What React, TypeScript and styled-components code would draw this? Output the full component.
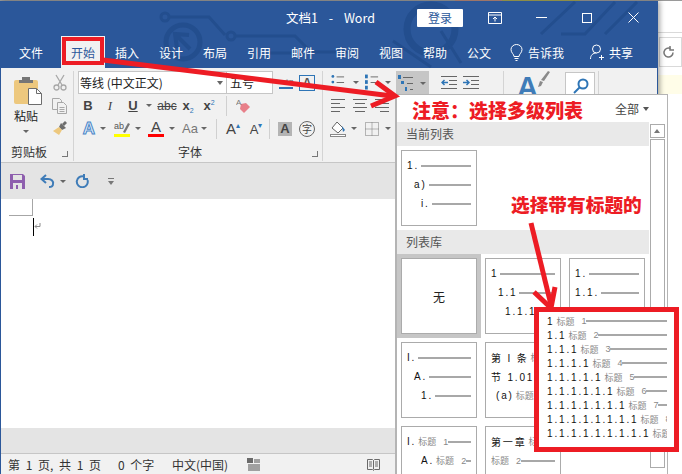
import React from "react";
import styled, { createGlobalStyle } from "styled-components";

const CJK = `"Noto Sans CJK SC", "Liberation Sans", sans-serif`;
const BLUE = "#2b579a";
const RED = "#ed1c24";

const GlobalStyle = createGlobalStyle`
  html, body { margin: 0; padding: 0; background: #fff; }
  * { box-sizing: border-box; }
  body { font-family: ${CJK}; font-size: 12px; }
`;

const tabs = ["插入", "设计", "布局", "引用", "邮件", "审阅", "视图", "帮助", "公文"];

type Level = { label: string; title?: string; num?: string; indent?: number; noLine?: boolean };

const currentList: Level[] = [
  { label: "1." },
  { label: "a)", indent: 7 },
  { label: "i.", indent: 14 },
];

const gallery: Level[][] = [
  [],
  [{ label: "1" }, { label: "1.1", indent: 7 }, { label: "1.1.1", indent: 14 }],
  [{ label: "1." }, { label: "1.1." }, { label: "1.1.1." }],
  [{ label: "I." }, { label: "A.", indent: 7 }, { label: "1.", indent: 14 }],
  [
    { label: "第 I 条", title: "标题", noLine: true },
    { label: "节 1.01", title: "标题", noLine: true },
    { label: "(a)", title: "标题", num: "3", indent: 5 },
  ],
  [],
  [
    { label: "I.", title: "标题", num: "1" },
    { label: "A.", title: "标题", num: "2", indent: 14 },
  ],
  [
    { label: "第一章", title: "标题", noLine: true },
    { label: "", title: "标题", num: "2" },
  ],
];

const headingLevels = [1, 2, 3, 4, 5, 6, 7, 8, 9];

export default function App() {
  return (
    <Page>
      <GlobalStyle />
      <BrowserTop />
      <Main>
        <WordWindow>
          <Circuit />
          <TitleBar>
            <DocTitle>文档1 - Word</DocTitle>
            <LoginButton>登录</LoginButton>
            <WinButton $ml={9}>
              <svg width="14" height="12" viewBox="0 0 14 12" fill="none" stroke="#fff">
                <path d="M.5.5h13v11H.5zM.5 3h13M7 9.5V5M5 7l2-2 2 2" />
              </svg>
            </WinButton>
            <WinButton>
              <svg width="11" height="1"><rect width="11" height="1" fill="#fff" /></svg>
            </WinButton>
            <WinButton>
              <svg width="10" height="10" fill="none" stroke="#fff"><rect x=".5" y=".5" width="9" height="9" /></svg>
            </WinButton>
            <WinButton>
              <svg width="11" height="11" fill="none" stroke="#fff"><path d="M.5.5l10 10M10.5.5l-10 10" /></svg>
            </WinButton>
          </TitleBar>
          <TabBar>
            <Tab $w={60}>文件</Tab>
            <Tab $w={44} $active>开始</Tab>
            {tabs.map((t) => (
              <Tab key={t} $w={44}>{t}</Tab>
            ))}
            <TabIcon $ml={9}>
              <svg width="13" height="17" viewBox="0 0 13 17" fill="none" stroke="#fff">
                <path d="M4 12.5C4 10 1 9 1 5.5a5.5 5 0 0 1 11 0C12 9 9 10 9 12.5zM4.5 14.5h4M5.5 16.5h2" />
              </svg>
            </TabIcon>
            <TabText $ml={5}>告诉我</TabText>
            <TabIcon $ml={26}>
              <svg width="15" height="17" viewBox="0 0 15 17" fill="none" stroke="#fff">
                <circle cx="6.5" cy="5" r="4" />
                <path d="M.5 15c0-4 2.500-6 6-6M11.500 11v5M9 13.500h5" />
              </svg>
            </TabIcon>
            <TabText $ml={4}>共享</TabText>
          </TabBar>
          <Ribbon>
            <Group $w={73}>
              <GroupBody>
                <PasteColumn>
                  <svg width="28" height="29" viewBox="0 0 28 29">
                    <rect x="0" y="4" width="24" height="24" rx="2" fill="#edc87e" />
                    <path d="M8 4V1h8v3h3v3H5V4z" fill="#767676" />
                    <path d="M14.500 12.500h8l5 5v11h-13z" fill="#fff" stroke="#6d6d6d" />
                    <path d="M22.500 12.500v5h5" fill="none" stroke="#6d6d6d" />
                  </svg>
                  <PasteLabel>粘贴</PasteLabel>
                  <PasteCaret />
                </PasteColumn>
                <SideColumn>
                  <Slot $w={19}>
                    <svg width="14" height="17" viewBox="0 0 14 17" fill="none" stroke="#a8a8a8" strokeWidth="1.300">
                      <path d="M3 1l6 10M11 1L5 11" />
                      <circle cx="3.500" cy="13.500" r="2.500" />
                      <circle cx="10.500" cy="13.500" r="2.500" />
                    </svg>
                  </Slot>
                  <Slot $w={19}>
                    <svg width="15" height="16" viewBox="0 0 15 16" fill="#f1f1f1" stroke="#a8a8a8">
                      <path d="M.5.5h7l2 2v9h-9z" />
                      <path d="M5.500 4.500h6l3 3v8h-9z" />
                      <path d="M7.500 9.500h5M7.500 11.500h5M7.500 13.500h5" />
                    </svg>
                  </Slot>
                  <Slot $w={19}>
                    <svg width="16" height="15" viewBox="0 0 16 15">
                      <path d="M9 2l5 5-4 2-3-3z" fill="#6d6d6d" />
                      <path d="M7 6l3 3-3 5-6-4z" fill="#edc87e" />
                      <path d="M13 0l2 2-3 3-2-2z" fill="#6d6d6d" />
                    </svg>
                  </Slot>
                </SideColumn>
              </GroupBody>
              <GroupLabel $pl={10}>
                剪贴板
                <Launcher $right={5} />
              </GroupLabel>
            </Group>
            <Group $w={249}>
              <GroupBody>
                <Rows>
                  <ToolRow $pl={4}>
                    <FontCombo>
                      等线 (中文正文)
                      <ComboCaret />
                    </FontCombo>
                    <SizeCombo>五号</SizeCombo>
                    <Slot $w={16} $ml={5}>
                      <WenIcon>wén</WenIcon>
                    </Slot>
                    <BoxedA>A</BoxedA>
                  </ToolRow>
                  <ToolRow $pl={4}>
                    <Slot $w={20}><Glyph $bold>B</Glyph></Slot>
                    <Slot $w={24}><Glyph $italic>I</Glyph></Slot>
                    <Slot $w={22}><Glyph $under>U</Glyph></Slot>
                    <Slot $w={10}><Caret /></Slot>
                    <Slot $w={26}><Glyph $strike $size={12}>abc</Glyph></Slot>
                    <Slot $w={16}><Glyph $bold>x<SmallBlue $sub>2</SmallBlue></Glyph></Slot>
                    <Slot $w={26}><Glyph $bold>x<SmallBlue>2</SmallBlue></Glyph></Slot>
                    <Slot $w={8}><VLine /></Slot>
                    <Slot $w={26}>
                      <svg width="14" height="16" viewBox="0 0 14 16">
                        <path d="M5 6l5-1 4 4-6 6-4-4z" fill="#e8808a" />
                        <text x="0" y="7" fontSize="8" fill="#777" fontFamily="Liberation Sans">A</text>
                      </svg>
                    </Slot>
                  </ToolRow>
                  <ToolRow $pl={4}>
                    <Slot $w={22}><EffectA>A</EffectA></Slot>
                    <Slot $w={6}><Caret /></Slot>
                    <Slot $w={20} $ml={6}>
                      <BarTool $bar="#ffff00">
                        <svg width="16" height="13" viewBox="0 0 16 13">
                          <text x="0" y="8" fontSize="9" fill="#555" fontFamily="Liberation Sans">ab</text>
                          <path d="M9 11l5-9 2 1-5 9z" fill="#777" />
                        </svg>
                      </BarTool>
                    </Slot>
                    <Slot $w={12}><Caret /></Slot>
                    <Slot $w={20} $ml={2}>
                      <BarTool $bar="#ff0000"><Glyph $size={15}>A</Glyph></BarTool>
                    </Slot>
                    <Slot $w={12}><Caret /></Slot>
                    <Slot $w={20} $ml={2}><Glyph $size={13} $light>Aa</Glyph></Slot>
                    <Slot $w={8}><Caret /></Slot>
                    <Slot $w={16}><VLine /></Slot>
                    <Slot $w={18}><Glyph $size={15}>A<BlueTick>▴</BlueTick></Glyph></Slot>
                    <Slot $w={18} $ml={5}><Glyph $size={13}>A<BlueTick>▾</BlueTick></Glyph></Slot>
                    <Slot $w={8}><VLine /></Slot>
                    <ShadedA>A</ShadedA>
                    <CircleChar>字</CircleChar>
                  </ToolRow>
                </Rows>
              </GroupBody>
              <GroupLabel $pl={104}>
                字体
                <Launcher $right={4} />
              </GroupLabel>
            </Group>
            <Group $w={181}>
              <GroupBody>
                <Rows>
                  <ToolRow $pl={8}>
                    <Slot $w={14}><ListIcon $kind="bullet" /></Slot>
                    <Slot $w={21}><Caret /></Slot>
                    <Slot $w={14} $ml={-1}><ListIcon $kind="number" /></Slot>
                    <Slot $w={17}><Caret /></Slot>
                    <ActiveTool>
                      <ListIcon $kind="multi" />
                      <Caret />
                    </ActiveTool>
                    <Slot $w={16} $ml={12}><IndentIcon /></Slot>
                    <Slot $w={16} $ml={6}><IndentIcon $flip /></Slot>
                  </ToolRow>
                  <ToolRow $pl={8}>
                    <Slot $w={14}><AlignIcon $pad="left" /></Slot>
                    <Slot $w={14} $ml={8}><AlignIcon $pad="center" /></Slot>
                    <Slot $w={14} $ml={8}><AlignIcon $pad="right" /></Slot>
                  </ToolRow>
                  <ToolRow $pl={7}>
                    <Slot $w={16}>
                      <svg width="16" height="16" viewBox="0 0 16 16">
                        <path d="M7 1l6 6-5 5-6-5z" fill="#fff" stroke="#666" />
                        <path d="M12 5l3 4-2 2z" fill="#2e75b6" />
                        <rect x="0.500" y="13.500" width="15" height="2" fill="#fff" stroke="#888" />
                      </svg>
                    </Slot>
                    <Slot $w={16}><Caret /></Slot>
                    <Slot $w={14} $ml={3}>
                      <svg width="14" height="14" stroke="#777" strokeDasharray="1 1" fill="none">
                        <path d="M.5.5h13v13H.5zM7 .5v13M.5 7h13" />
                      </svg>
                    </Slot>
                    <Slot $w={18}><Caret /></Slot>
                  </ToolRow>
                </Rows>
              </GroupBody>
            </Group>
            <Group $w={95}>
              <StylesBody>
                <BigA>A</BigA>
                <svg width="12" height="16" viewBox="0 0 12 16">
                  <path d="M10 0l2 1-6 9-3-1zM2 10l3 1-2 4-3 1z" fill="#8a8a8a" />
                </svg>
                <FindBox>
                  <svg width="16" height="16" viewBox="0 0 16 16" fill="none" stroke="#2e75b6" strokeWidth="2">
                    <circle cx="10" cy="6" r="4.500" />
                    <path d="M7 9l-6 6" />
                  </svg>
                </FindBox>
              </StylesBody>
            </Group>
          </Ribbon>
          <QuickBar>
            <svg width="15" height="15" viewBox="0 0 15 15">
              <path d="M0 0h13l2 2v13H0z" fill="#8e5fae" />
              <rect x="3" y="1" width="9" height="5" fill="#e4e4e4" />
              <rect x="3" y="9" width="9" height="6" fill="#e4e4e4" />
              <rect x="6" y="11" width="2" height="4" fill="#8e5fae" />
            </svg>
            <QuickSlot $ml={15}>
              <svg width="15" height="14" viewBox="0 0 15 14" fill="none" stroke="#3f7cb8" strokeWidth="2">
                <path d="M6 1L1.500 5 6 9" />
                <path d="M2 5h6a5 4 0 0 1 5 5c0 2-2 3-4 3" />
              </svg>
            </QuickSlot>
            <QuickSlot $ml={5}><Caret /></QuickSlot>
            <QuickSlot $ml={9}>
              <svg width="14" height="14" viewBox="0 0 14 14" fill="none" stroke="#3f7cb8" strokeWidth="2">
                <path d="M9 2.500A5.500 5.500 0 1 0 12.500 6" />
                <path d="M9 0v5h4" />
              </svg>
            </QuickSlot>
            <QuickSlot $ml={19}>
              <svg width="6" height="7" viewBox="0 0 6 7" fill="#777">
                <rect width="6" height="1" />
                <path d="M0 3h6L3 7z" />
              </svg>
            </QuickSlot>
          </QuickBar>
          <DocArea>
            <MarginCorner />
            <CursorLine>
              <svg width="7" height="7" viewBox="0 0 7 7" fill="none" stroke="#8a8a8a">
                <path d="M6 0v3.500H1M3 1.500L1 3.500l2 2" />
              </svg>
            </CursorLine>
          </DocArea>
          <ScrollStrip />
          <StatusBar>
            <StatusText $w={110}>第 1 页, 共 1 页</StatusText>
            <StatusText $w={54}>0 个字</StatusText>
            <StatusText $w={75}>中文(中国)</StatusText>
            <svg width="13" height="13" viewBox="0 0 13 13" fill="#6a6a6a">
              <rect x="0" y="0" width="6" height="5" />
              <path d="M1 6h12v7H1zM7 1h6v4H7z" opacity=".6" />
            </svg>
            <ReadIcon>
              <svg width="13" height="13" viewBox="0 0 13 13" fill="none" stroke="#6a6a6a">
                <path d="M.5 1.500h5l1 1 1-1h5v10h-5l-1 1-1-1h-5zM6.500 2.500v9M2 4h3M2 6h3M2 8h3M8 4h3M8 6h3M8 8h3" />
              </svg>
            </ReadIcon>
          </StatusBar>
        </WordWindow>
        <BrowserSide>
          <ReloadBox>
            <svg width="11" height="12" viewBox="0 0 11 12" fill="none" stroke="#777" strokeWidth="1.500">
              <path d="M7.500 2.500A4.500 4.500 0 1 0 10 6.500" />
              <path d="M7 0v4h4" />
            </svg>
          </ReloadBox>
          <InfoBar />
        </BrowserSide>
      </Main>

      <ListPanel>
        <PanelHeader>
          全部
          <PanelCaret />
        </PanelHeader>
        <PanelBody>
          <PanelList>
            <SectionHead>当前列表</SectionHead>
            <CellGrid>
              <ListCell levels={currentList} />
            </CellGrid>
            <SectionHead>列表库</SectionHead>
            <CellGrid>
              {gallery.map((levels, i) =>
                i === 0 ? (
                  <Cell key={i} $selected>
                    <CellInner $center>无</CellInner>
                  </Cell>
                ) : (
                  <ListCell key={i} levels={levels} />
                ),
              )}
            </CellGrid>
          </PanelList>
          <ScrollColumn>
            <ScrollUp />
            <ScrollThumb />
          </ScrollColumn>
        </PanelBody>
      </ListPanel>

      <TabHighlight />
      <ArrowLayer width="682" height="474" viewBox="0 0 682 474">
        <g fill="none" stroke={RED} strokeWidth="5" strokeLinejoin="miter">
          <path d="M103 60L392 96" />
          <path d="M376 82L395 96L371 106" />
          <path d="M531 223L551 305" />
          <path d="M534 292L551 308L555 287" />
        </g>
      </ArrowLayer>
      <NoteOne>注意：选择多级列表</NoteOne>
      <NoteTwo>选择带有标题的</NoteTwo>
      <HeadingBox>
        {headingLevels.map((n) => (
          <HeadingRow key={n}>
            <LevelLabel>{Array.from({ length: n }, () => "1").join(".")}</LevelLabel>
            <TitleMark>标题</TitleMark>
            {n < 9 && <TitleNum>{n}</TitleNum>}
            {n < 8 && <RowLine />}
          </HeadingRow>
        ))}
      </HeadingBox>
    </Page>
  );
}

function ListCell({ levels }: { levels: Level[] }) {
  return (
    <Cell>
      <CellInner>
        {levels.map((l, i) => (
          <CellRow key={i} $indent={l.indent ?? 0}>
            {l.label && <LevelLabel>{l.label}</LevelLabel>}
            {l.title && <TitleMark>{l.title}</TitleMark>}
            {l.num && <TitleNum>{l.num}</TitleNum>}
            {!l.noLine && <RowLine />}
          </CellRow>
        ))}
      </CellInner>
    </Cell>
  );
}

function Circuit() {
  return (
    <CircuitSvg width="656" height="67" viewBox="0 0 656 67" fill="none" stroke="#234e8e" strokeWidth="3">
      <circle cx="164" cy="16" r="4" />
      <path d="M168 16h40l16 18" />
      <circle cx="182" cy="41" r="17" strokeWidth="5" />
      <path d="M176 47l-2-14 14 1M175 34l14 14" strokeWidth="4" />
      <circle cx="230" cy="35" r="4" />
      <path d="M234 35h60l16 16h40M268 52h34" />
      <circle cx="430" cy="28" r="24" strokeWidth="7" />
      <path d="M392 40l38 26M440 30l20 32M540 33l34-32M560 33h24l30-32M604 33l32-32" />
    </CircuitSvg>
  );
}

function ListIcon({ $kind }: { $kind: "bullet" | "number" | "multi" }) {
  const c = "#2e75b6";
  return (
    <svg width="15" height="17" viewBox="0 0 15 17" stroke="#666">
      {$kind === "bullet" && (
        <>
          <circle cx="2" cy="2" r="1.500" fill={c} stroke="none" />
          <circle cx="2" cy="8" r="1.500" fill={c} stroke="none" />
          <path d="M6 2.500h8M6 8.500h8" />
        </>
      )}
      {$kind === "number" && (
        <>
          <rect x="0" y="0" width="3" height="4" fill={c} stroke="none" />
          <rect x="0" y="6" width="3" height="4" fill={c} stroke="none" />
          <rect x="0" y="12" width="3" height="4" fill={c} stroke="none" />
          <path d="M6 2.500h8M6 8.500h8" />
        </>
      )}
      {$kind === "multi" && (
        <>
          <rect x="0" y="0" width="3" height="4" fill={c} stroke="none" />
          <rect x="3" y="6" width="3" height="3" fill={c} stroke="none" />
          <rect x="7" y="12" width="2" height="4" fill={c} stroke="none" />
          <path d="M5 2.500h10M9 8.500h6M12 14.500h3" />
        </>
      )}
    </svg>
  );
}

function IndentIcon({ $flip }: { $flip?: boolean }) {
  return (
    <svg width="16" height="13" viewBox="0 0 16 13" fill="none" stroke="#666">
      <path d="M0 .5h16M8 4.500h8M8 8.500h8M0 12.500h16" />
      <path
        d={$flip ? "M0 6.500h6M3.500 4l2.500 2.500L3.500 9" : "M7 6.500H1M3.500 4L1 6.500 3.500 9"}
        stroke="#2e75b6"
        strokeWidth="1.500"
      />
    </svg>
  );
}

function AlignIcon({ $pad }: { $pad: "left" | "center" | "right" }) {
  const short = $pad === "left" ? "M0 4.500h9M0 12.500h9" : $pad === "center" ? "M2 4.500h10M2 12.500h10" : "M5 4.500h9M5 12.500h9";
  return (
    <svg width="14" height="13" viewBox="0 0 14 13" fill="none" stroke="#666">
      <path d="M0 .5h14M0 8.500h14" />
      <path d={short} />
    </svg>
  );
}

const Page = styled.div`
  position: relative;
  width: 682px;
  height: 474px;
  overflow: hidden;
  background: #fff;
  display: flex;
  flex-direction: column;
  color: #222;
`;

const BrowserTop = styled.div`
  height: 1px;
  flex: none;
  background: linear-gradient(
    90deg,
    #9a9a9a 0,
    #9a9a9a 455px,
    #b98a7c 455px,
    #b98a7c 502px,
    #a6a655 502px,
    #a6a655 580px,
    #9a9a9a 580px
  );
`;

const Main = styled.div`
  flex: 1;
  display: flex;
  min-height: 0;
`;

const WordWindow = styled.div`
  position: relative;
  width: 658px;
  flex: none;
  display: flex;
  flex-direction: column;
  border-left: 1px solid ${BLUE};
  border-right: 1px solid ${BLUE};
  background: ${BLUE};
  box-shadow: 2px 0 5px rgba(0, 0, 0, 0.35);
  z-index: 1;
`;

const CircuitSvg = styled.svg`
  position: absolute;
  left: 0;
  top: 0;
`;

const TitleBar = styled.div`
  position: relative;
  height: 33px;
  flex: none;
  display: flex;
  align-items: center;
  color: #fff;
`;

const DocTitle = styled.div`
  width: 416px;
  padding-left: 285px;
  font-size: 12.500px;
  word-spacing: 8px;
  white-space: pre;
`;

const LoginButton = styled.div`
  width: 46px;
  height: 18px;
  background: #fff;
  color: ${BLUE};
  border-radius: 1px;
  display: flex;
  align-items: center;
  justify-content: center;
  font-size: 12px;
`;

const WinButton = styled.div<{ $ml?: number }>`
  width: 46px;
  height: 33px;
  margin-left: ${(p) => p.$ml ?? 0}px;
  display: flex;
  align-items: center;
  justify-content: center;
`;

const TabBar = styled.div`
  position: relative;
  height: 34px;
  flex: none;
  display: flex;
  align-items: flex-end;
  color: #fff;
`;

const Tab = styled.div<{ $w: number; $active?: boolean }>`
  width: ${(p) => p.$w}px;
  height: 32px;
  display: flex;
  align-items: center;
  justify-content: center;
  font-size: 12px;
  background: ${(p) => (p.$active ? "#f1f1f1" : "transparent")};
  color: ${(p) => (p.$active ? BLUE : "#fff")};
`;

const TabIcon = styled.div<{ $ml: number }>`
  height: 32px;
  margin-left: ${(p) => p.$ml}px;
  display: flex;
  align-items: center;
`;

const TabText = styled.div<{ $ml: number }>`
  height: 32px;
  margin-left: ${(p) => p.$ml}px;
  display: flex;
  align-items: center;
  font-size: 12px;
`;

const Ribbon = styled.div`
  height: 95px;
  flex: none;
  display: flex;
  background: #f1f1f1;
  border-bottom: 1px solid #c6c6c6;
`;

const Group = styled.div<{ $w: number }>`
  position: relative;
  width: ${(p) => p.$w}px;
  flex: none;
  height: 90px;
  margin-top: 3px;
  border-right: 1px solid #d4d4d4;
  display: flex;
  flex-direction: column;
`;

const GroupBody = styled.div`
  height: 74px;
  display: flex;
`;

const GroupLabel = styled.div<{ $pl: number }>`
  position: relative;
  height: 14px;
  line-height: 14px;
  padding-left: ${(p) => p.$pl}px;
  font-size: 12px;
  color: #333;
`;

const Launcher = styled.span<{ $right: number }>`
  position: absolute;
  right: ${(p) => p.$right}px;
  top: 6px;
  width: 6px;
  height: 6px;
  border-right: 1px solid #777;
  border-bottom: 1px solid #777;
`;

const PasteColumn = styled.div`
  width: 47px;
  padding: 5px 0 0 13px;
  display: flex;
  flex-direction: column;
  align-items: flex-start;
`;

const PasteLabel = styled.div`
  margin-top: 2px;
  font-size: 12px;
  line-height: 18px;
`;

const SideColumn = styled.div`
  display: flex;
  flex-direction: column;
  margin-left: 2px;
`;

const Caret = styled.span`
  display: inline-block;
  flex: none;
  width: 0;
  height: 0;
  border-left: 3px solid transparent;
  border-right: 3px solid transparent;
  border-top: 3px solid #666;
`;

const PasteCaret = styled(Caret)`
  margin: 5px 0 0 9px;
`;

const Rows = styled.div`
  display: flex;
  flex-direction: column;
`;

const ToolRow = styled.div<{ $pl: number }>`
  height: 23px;
  display: flex;
  align-items: center;
  padding-left: ${(p) => p.$pl}px;
`;

const Slot = styled.div<{ $w: number; $ml?: number }>`
  width: ${(p) => p.$w}px;
  height: 23px;
  flex: none;
  margin-left: ${(p) => p.$ml ?? 0}px;
  display: flex;
  align-items: center;
  justify-content: center;
`;

const VLine = styled.span`
  width: 1px;
  height: 20px;
  background: #d0d0d0;
`;

const FontCombo = styled.div`
  position: relative;
  width: 149px;
  height: 23px;
  background: #fff;
  border: 1px solid #c6c6c6;
  padding-left: 1px;
  font-size: 12px;
  line-height: 21px;
`;

const ComboCaret = styled.span`
  position: absolute;
  right: 3px;
  top: 9px;
  border-left: 3px solid transparent;
  border-right: 3px solid transparent;
  border-top: 4px solid #666;
`;

const SizeCombo = styled.div`
  width: 46px;
  height: 23px;
  background: #fff;
  border: 1px solid #c6c6c6;
  border-left: none;
  padding-left: 3px;
  font-size: 12px;
  line-height: 21px;
`;

const WenIcon = styled.span`
  font-size: 8px;
  color: #555;
  border-bottom: 2px solid #2e75b6;
  line-height: 10px;
  font-family: "Liberation Sans", sans-serif;
`;

const BoxedA = styled.div`
  width: 16px;
  height: 16px;
  margin-left: 5px;
  border: 1px solid #2e75b6;
  font: bold 12px/14px "Liberation Sans", sans-serif;
  text-align: center;
  color: #555;
`;

const Glyph = styled.span<{
  $bold?: boolean;
  $italic?: boolean;
  $under?: boolean;
  $strike?: boolean;
  $light?: boolean;
  $size?: number;
}>`
  font-family: ${(p) => (p.$italic ? `"Liberation Serif", serif` : `"Liberation Sans", sans-serif`)};
  font-size: ${(p) => p.$size ?? 13}px;
  font-weight: ${(p) => (p.$bold || p.$under ? 700 : 400)};
  font-style: ${(p) => (p.$italic ? "italic" : "normal")};
  text-decoration: ${(p) => (p.$under ? "underline" : p.$strike ? "line-through" : "none")};
  color: ${(p) => (p.$light ? "#777" : "#444")};
  white-space: nowrap;
`;

const SmallBlue = styled.span<{ $sub?: boolean }>`
  font-size: 7px;
  font-weight: 400;
  color: #2e75b6;
  vertical-align: ${(p) => (p.$sub ? "-3px" : "5px")};
`;

const BlueTick = styled.span`
  font-size: 8px;
  color: #2e75b6;
  vertical-align: 6px;
`;

const EffectA = styled.span`
  font: bold 17px "Liberation Sans", sans-serif;
  color: #e6f0fa;
  -webkit-text-stroke: 1px #4a86c8;
`;

const BarTool = styled.span<{ $bar: string }>`
  display: flex;
  flex-direction: column;
  align-items: center;
  line-height: 14px;

  &::after {
    content: "";
    width: 16px;
    height: 3px;
    background: ${(p) => p.$bar};
  }
`;

const ShadedA = styled.div`
  width: 14px;
  height: 14px;
  margin-left: 5px;
  background: #b4b4b4;
  font: bold 13px/14px "Liberation Sans", sans-serif;
  text-align: center;
  color: #444;
`;

const CircleChar = styled.div`
  width: 16px;
  height: 16px;
  margin-left: 7px;
  border: 1px solid #666;
  border-radius: 50%;
  font-size: 10px;
  line-height: 14px;
  text-align: center;
  color: #444;
`;

const ActiveTool = styled.div`
  width: 33px;
  height: 23px;
  padding: 2px 0 0 2px;
  background: #c6c6c6;
  display: flex;
  align-items: center;
  gap: 7px;
`;

const StylesBody = styled.div`
  display: flex;
  align-items: flex-start;
  padding-left: 13px;
`;

const BigA = styled.div`
  font: bold 29px/30px "Liberation Sans", sans-serif;
  color: #3f7cb8;
  margin-top: 1px;
`;

const FindBox = styled.div`
  width: 30px;
  height: 40px;
  margin: 1px 0 0 15px;
  background: #fff;
  border: 1px solid #c6c6c6;
  padding: 5px 0 0 7px;
`;

const QuickBar = styled.div`
  height: 36px;
  flex: none;
  display: flex;
  align-items: center;
  padding: 0 0 0 9px;
  background: #e4e4e4;
`;

const QuickSlot = styled.div<{ $ml: number }>`
  margin-left: ${(p) => p.$ml}px;
  display: flex;
  align-items: center;
`;

const DocArea = styled.div`
  flex: 1;
  background: #fff;
  padding-left: 8px;
`;

const MarginCorner = styled.div`
  width: 24px;
  height: 17px;
  border-right: 1px solid #a6a6a6;
  border-bottom: 1px solid #a6a6a6;
`;

const CursorLine = styled.div`
  width: 10px;
  height: 18px;
  margin: 2px 0 0 24px;
  border-left: 1px solid #000;
  padding: 5px 0 0 0;
  display: flex;
`;

const ScrollStrip = styled.div`
  height: 26px;
  flex: none;
  background: #e4e4e4;
  border-bottom: 1px solid #c6c6c6;
`;

const StatusBar = styled.div`
  height: 20px;
  flex: none;
  display: flex;
  align-items: center;
  padding-left: 7px;
  background: #f1f1f1;
`;

const StatusText = styled.div<{ $w: number }>`
  width: ${(p) => p.$w}px;
  font-size: 12px;
  word-spacing: 3px;
  color: #333;
  white-space: pre;
`;

const ReadIcon = styled.div`
  margin-left: 107px;
  display: flex;
`;

const BrowserSide = styled.div`
  flex: 1;
  margin-top: 31px;
  border-top: 1px solid #d9d9d9;
  display: flex;
  flex-direction: column;
`;

const ReloadBox = styled.div`
  width: 23px;
  height: 30px;
  margin-top: 4px;
  margin-left: 1px;
  border: 1px solid #d9d9d9;
  padding-left: 3px;
  display: flex;
  align-items: center;
`;

const InfoBar = styled.div`
  height: 19px;
  margin-top: 8px;
  background: #fffde8;
`;

const ListPanel = styled.div`
  position: absolute;
  left: 395px;
  top: 94px;
  width: 273px;
  height: 380px;
  background: #fff;
  border: 1px solid #b4b4b4;
  border-left-width: 2px;
  border-bottom: none;
  z-index: 2;
  overflow: hidden;
`;

const PanelHeader = styled.div`
  height: 27px;
  display: flex;
  align-items: center;
  justify-content: flex-end;
  gap: 4px;
  padding-right: 18px;
  font-size: 12px;
  color: #444;
`;

const PanelCaret = styled.span`
  border-left: 3.500px solid transparent;
  border-right: 3.500px solid transparent;
  border-top: 4px solid #555;
`;

const PanelBody = styled.div`
  display: flex;
`;

const PanelList = styled.div`
  width: 252px;
  flex: none;
`;

const SectionHead = styled.div`
  height: 24px;
  line-height: 24px;
  padding-left: 9px;
  background: #e9e9e9;
  font-size: 12px;
  color: #555;
`;

const CellGrid = styled.div`
  display: grid;
  grid-template-columns: repeat(3, 84px);
  grid-auto-rows: 84px;
`;

const Cell = styled.div<{ $selected?: boolean }>`
  padding: 4px;
  background: ${(p) => (p.$selected ? "#c6c6c6" : "transparent")};
`;

const CellInner = styled.div<{ $center?: boolean }>`
  height: 76px;
  overflow: hidden;
  background: #fff;
  border: 1px solid #ababab;
  padding: ${(p) => (p.$center ? "0" : "5px 5px 0")};
  display: flex;
  flex-direction: column;
  align-items: ${(p) => (p.$center ? "center" : "stretch")};
  justify-content: ${(p) => (p.$center ? "center" : "flex-start")};
  font-size: 12px;
`;

const CellRow = styled.div<{ $indent: number }>`
  height: 19px;
  flex: none;
  display: flex;
  align-items: center;
  padding-left: ${(p) => p.$indent}px;
  white-space: nowrap;
  overflow: hidden;
`;

const LevelLabel = styled.span`
  flex: none;
  margin-right: 2px;
  font: 10px "Liberation Sans", "Noto Sans CJK SC", sans-serif;
  letter-spacing: 1.830px;
  color: #111;
`;

const TitleMark = styled.span`
  flex: none;
  font-size: 9px;
  color: #888;
`;

const TitleNum = styled.span`
  flex: none;
  margin-left: 7px;
  font: 9px "Liberation Sans", sans-serif;
  color: #888;
`;

const RowLine = styled.span`
  flex: 1;
  min-width: 0;
  height: 2px;
  background: #a8a8a8;
`;

const ScrollColumn = styled.div`
  width: 15px;
  margin-left: 1px;
  flex: none;
  display: flex;
  flex-direction: column;
  padding-top: 2px;
`;

const ScrollUp = styled.div`
  height: 14px;
  border: 1px solid #ababab;
  position: relative;

  &::after {
    content: "";
    position: absolute;
    left: 3px;
    top: 4px;
    border-left: 3.500px solid transparent;
    border-right: 3.500px solid transparent;
    border-bottom: 4px solid #777;
  }
`;

const ScrollThumb = styled.div`
  height: 329px;
  margin-top: 1px;
  border: 1px solid #ababab;
`;

const TabHighlight = styled.div`
  position: absolute;
  left: 62px;
  top: 37px;
  width: 42px;
  height: 28px;
  border: 4px solid ${RED};
  z-index: 3;
`;

const ArrowLayer = styled.svg`
  position: absolute;
  left: 0;
  top: 0;
  z-index: 3;
`;

const Note = styled.div`
  position: absolute;
  z-index: 4;
  color: ${RED};
  font-weight: 900;
  white-space: nowrap;
`;

const NoteOne = styled(Note)`
  left: 412px;
  top: 97px;
  font-size: 19px;
  line-height: 26px;
`;

const NoteTwo = styled(Note)`
  left: 511px;
  top: 191px;
  font-size: 18.700px;
  line-height: 26px;
`;

const HeadingBox = styled.div`
  position: absolute;
  left: 534px;
  top: 307px;
  width: 145px;
  height: 145px;
  border: 5px solid ${RED};
  background: #fff;
  padding: 2px 7px 0 8px;
  z-index: 3;
`;

const HeadingRow = styled.div`
  height: 14px;
  display: flex;
  align-items: center;
  overflow: hidden;
  white-space: nowrap;
`;
